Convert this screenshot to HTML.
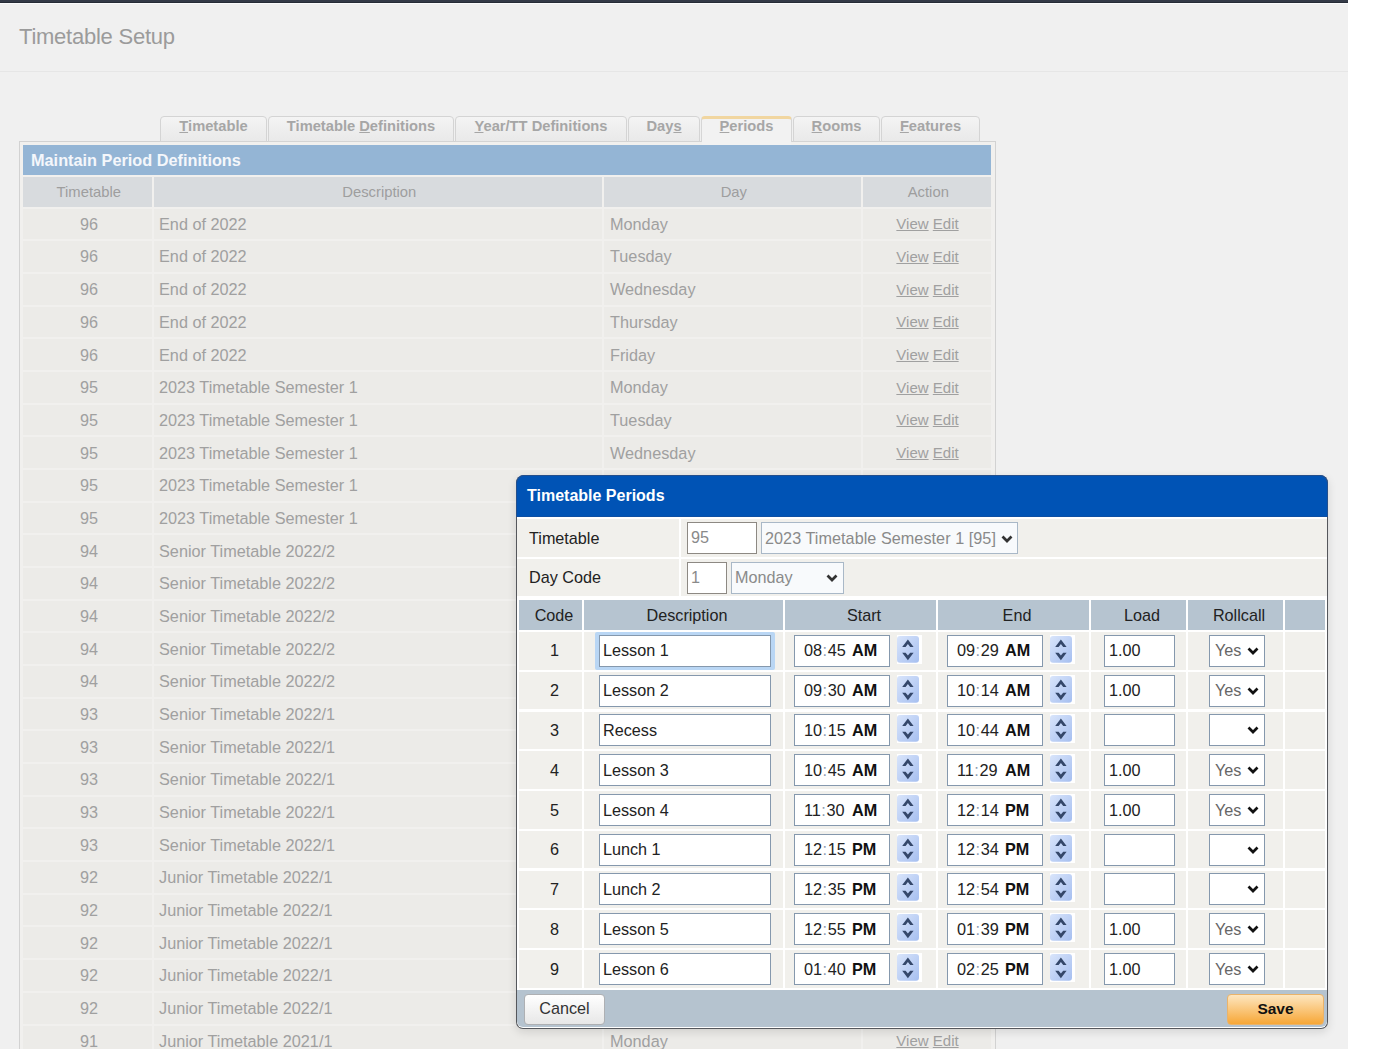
<!DOCTYPE html><html><head><meta charset="utf-8"><style>
*{box-sizing:border-box;margin:0;padding:0}
html,body{width:1396px;height:1049px;overflow:hidden;background:#fff;font-family:"Liberation Sans",sans-serif}
.a{position:absolute}
.t{position:absolute;white-space:nowrap;line-height:1}
u{text-decoration:underline}
</style></head><body>

<div class="a" style="left:0px;top:0px;width:1348px;height:1049px;background:#f0f0f0"></div>
<div class="a" style="left:0px;top:0px;width:1348px;height:2px;background:#343a47"></div>
<div class="a" style="left:0px;top:2px;width:1348px;height:1px;background:#262b36"></div>
<div class="a" style="left:0px;top:3px;width:1348px;height:1px;background:#fbfbfc"></div>
<div class="t" style="left:19px;top:26px;font-size:22px;color:#9b9b9b;letter-spacing:-0.24px">Timetable Setup</div>
<div class="a" style="left:0px;top:71px;width:1348px;height:1px;background:#e6e6e6"></div>
<div class="a" style="left:19px;top:141px;width:977px;height:920px;border:1px solid #d2d2d2;background:#f1f0ee"></div>
<div class="a" style="left:160px;top:116px;width:107px;height:26px;border:1px solid #d4d4d4;border-radius:4px 4px 0 0;background:linear-gradient(#f4f4f4,#e9e9e9)"></div>
<div class="t" style="left:160px;top:119px;font-size:14.7px;color:#a6a6a6;font-weight:bold;width:107px;text-align:center"><u>T</u>imetable</div>
<div class="a" style="left:268px;top:116px;width:186px;height:26px;border:1px solid #d4d4d4;border-radius:4px 4px 0 0;background:linear-gradient(#f4f4f4,#e9e9e9)"></div>
<div class="t" style="left:268px;top:119px;font-size:14.7px;color:#a6a6a6;font-weight:bold;width:186px;text-align:center">Timetable <u>D</u>efinitions</div>
<div class="a" style="left:455px;top:116px;width:172px;height:26px;border:1px solid #d4d4d4;border-radius:4px 4px 0 0;background:linear-gradient(#f4f4f4,#e9e9e9)"></div>
<div class="t" style="left:455px;top:119px;font-size:14.7px;color:#a6a6a6;font-weight:bold;width:172px;text-align:center"><u>Y</u>ear/TT Definitions</div>
<div class="a" style="left:628px;top:116px;width:72px;height:26px;border:1px solid #d4d4d4;border-radius:4px 4px 0 0;background:linear-gradient(#f4f4f4,#e9e9e9)"></div>
<div class="t" style="left:628px;top:119px;font-size:14.7px;color:#a6a6a6;font-weight:bold;width:72px;text-align:center">Day<u>s</u></div>
<div class="a" style="left:701px;top:116px;width:91px;height:26px;border:1px solid #d6d6d6;border-bottom:none;border-top:3px solid #f1d6a0;border-radius:4px 4px 0 0;background:#f2f2f2"></div>
<div class="a" style="left:702px;top:141px;width:89px;height:4px;background:#f2f2f2"></div>
<div class="t" style="left:701px;top:119px;font-size:14.7px;color:#a6a6a6;font-weight:bold;width:91px;text-align:center"><u>P</u>eriods</div>
<div class="a" style="left:793px;top:116px;width:87px;height:26px;border:1px solid #d4d4d4;border-radius:4px 4px 0 0;background:linear-gradient(#f4f4f4,#e9e9e9)"></div>
<div class="t" style="left:793px;top:119px;font-size:14.7px;color:#a6a6a6;font-weight:bold;width:87px;text-align:center"><u>R</u>ooms</div>
<div class="a" style="left:881px;top:116px;width:99px;height:26px;border:1px solid #d4d4d4;border-radius:4px 4px 0 0;background:linear-gradient(#f4f4f4,#e9e9e9)"></div>
<div class="t" style="left:881px;top:119px;font-size:14.7px;color:#a6a6a6;font-weight:bold;width:99px;text-align:center"><u>F</u>eatures</div>
<div class="a" style="left:23px;top:145px;width:968px;height:30px;background:#94b5d5"></div>
<div class="t" style="left:31px;top:152px;font-size:16.3px;color:#f4f7fb;font-weight:bold">Maintain Period Definitions</div>
<div class="a" style="left:23px;top:177px;width:129px;height:30px;background:#d8dbde"></div>
<div class="t" style="left:24.3px;top:185px;font-size:14.8px;color:#9e9e9e;width:129px;text-align:center">Timetable</div>
<div class="a" style="left:154px;top:177px;width:448px;height:30px;background:#d8dbde"></div>
<div class="t" style="left:155.3px;top:185px;font-size:14.8px;color:#9e9e9e;width:448px;text-align:center">Description</div>
<div class="a" style="left:604px;top:177px;width:257px;height:30px;background:#d8dbde"></div>
<div class="t" style="left:605.3px;top:185px;font-size:14.8px;color:#9e9e9e;width:257px;text-align:center">Day</div>
<div class="a" style="left:863px;top:177px;width:128px;height:30px;background:#d8dbde"></div>
<div class="t" style="left:864.3px;top:185px;font-size:14.8px;color:#9e9e9e;width:128px;text-align:center">Action</div>
<div class="a" style="left:23px;top:209px;width:129px;height:30px;background:#ecebe8"></div>
<div class="a" style="left:154px;top:209px;width:448px;height:30px;background:#ecebe8"></div>
<div class="a" style="left:604px;top:209px;width:257px;height:30px;background:#ecebe8"></div>
<div class="a" style="left:863px;top:209px;width:128px;height:30px;background:#ecebe8"></div>
<div class="t" style="left:24.5px;top:216px;font-size:16.2px;color:#a0a0a0;width:129px;text-align:center">96</div>
<div class="t" style="left:159px;top:216px;font-size:16.25px;color:#a0a0a0">End of 2022</div>
<div class="t" style="left:610px;top:216px;font-size:16.25px;color:#a0a0a0">Monday</div>
<div class="t" style="left:863px;top:216px;font-size:15px;color:#a0a0a0;width:129px;text-align:center"><u>View</u> <u>Edit</u></div>
<div class="a" style="left:23px;top:241px;width:129px;height:31px;background:#ecebe8"></div>
<div class="a" style="left:154px;top:241px;width:448px;height:31px;background:#ecebe8"></div>
<div class="a" style="left:604px;top:241px;width:257px;height:31px;background:#ecebe8"></div>
<div class="a" style="left:863px;top:241px;width:128px;height:31px;background:#ecebe8"></div>
<div class="t" style="left:24.5px;top:248px;font-size:16.2px;color:#a0a0a0;width:129px;text-align:center">96</div>
<div class="t" style="left:159px;top:248px;font-size:16.25px;color:#a0a0a0">End of 2022</div>
<div class="t" style="left:610px;top:248px;font-size:16.25px;color:#a0a0a0">Tuesday</div>
<div class="t" style="left:863px;top:249px;font-size:15px;color:#a0a0a0;width:129px;text-align:center"><u>View</u> <u>Edit</u></div>
<div class="a" style="left:23px;top:274px;width:129px;height:31px;background:#ecebe8"></div>
<div class="a" style="left:154px;top:274px;width:448px;height:31px;background:#ecebe8"></div>
<div class="a" style="left:604px;top:274px;width:257px;height:31px;background:#ecebe8"></div>
<div class="a" style="left:863px;top:274px;width:128px;height:31px;background:#ecebe8"></div>
<div class="t" style="left:24.5px;top:281px;font-size:16.2px;color:#a0a0a0;width:129px;text-align:center">96</div>
<div class="t" style="left:159px;top:281px;font-size:16.25px;color:#a0a0a0">End of 2022</div>
<div class="t" style="left:610px;top:281px;font-size:16.25px;color:#a0a0a0">Wednesday</div>
<div class="t" style="left:863px;top:282px;font-size:15px;color:#a0a0a0;width:129px;text-align:center"><u>View</u> <u>Edit</u></div>
<div class="a" style="left:23px;top:307px;width:129px;height:30px;background:#ecebe8"></div>
<div class="a" style="left:154px;top:307px;width:448px;height:30px;background:#ecebe8"></div>
<div class="a" style="left:604px;top:307px;width:257px;height:30px;background:#ecebe8"></div>
<div class="a" style="left:863px;top:307px;width:128px;height:30px;background:#ecebe8"></div>
<div class="t" style="left:24.5px;top:314px;font-size:16.2px;color:#a0a0a0;width:129px;text-align:center">96</div>
<div class="t" style="left:159px;top:314px;font-size:16.25px;color:#a0a0a0">End of 2022</div>
<div class="t" style="left:610px;top:314px;font-size:16.25px;color:#a0a0a0">Thursday</div>
<div class="t" style="left:863px;top:314px;font-size:15px;color:#a0a0a0;width:129px;text-align:center"><u>View</u> <u>Edit</u></div>
<div class="a" style="left:23px;top:339px;width:129px;height:31px;background:#ecebe8"></div>
<div class="a" style="left:154px;top:339px;width:448px;height:31px;background:#ecebe8"></div>
<div class="a" style="left:604px;top:339px;width:257px;height:31px;background:#ecebe8"></div>
<div class="a" style="left:863px;top:339px;width:128px;height:31px;background:#ecebe8"></div>
<div class="t" style="left:24.5px;top:347px;font-size:16.2px;color:#a0a0a0;width:129px;text-align:center">96</div>
<div class="t" style="left:159px;top:347px;font-size:16.25px;color:#a0a0a0">End of 2022</div>
<div class="t" style="left:610px;top:347px;font-size:16.25px;color:#a0a0a0">Friday</div>
<div class="t" style="left:863px;top:347px;font-size:15px;color:#a0a0a0;width:129px;text-align:center"><u>View</u> <u>Edit</u></div>
<div class="a" style="left:23px;top:372px;width:129px;height:31px;background:#ecebe8"></div>
<div class="a" style="left:154px;top:372px;width:448px;height:31px;background:#ecebe8"></div>
<div class="a" style="left:604px;top:372px;width:257px;height:31px;background:#ecebe8"></div>
<div class="a" style="left:863px;top:372px;width:128px;height:31px;background:#ecebe8"></div>
<div class="t" style="left:24.5px;top:379px;font-size:16.2px;color:#a0a0a0;width:129px;text-align:center">95</div>
<div class="t" style="left:159px;top:379px;font-size:16.25px;color:#a0a0a0">2023 Timetable Semester 1</div>
<div class="t" style="left:610px;top:379px;font-size:16.25px;color:#a0a0a0">Monday</div>
<div class="t" style="left:863px;top:380px;font-size:15px;color:#a0a0a0;width:129px;text-align:center"><u>View</u> <u>Edit</u></div>
<div class="a" style="left:23px;top:405px;width:129px;height:30px;background:#ecebe8"></div>
<div class="a" style="left:154px;top:405px;width:448px;height:30px;background:#ecebe8"></div>
<div class="a" style="left:604px;top:405px;width:257px;height:30px;background:#ecebe8"></div>
<div class="a" style="left:863px;top:405px;width:128px;height:30px;background:#ecebe8"></div>
<div class="t" style="left:24.5px;top:412px;font-size:16.2px;color:#a0a0a0;width:129px;text-align:center">95</div>
<div class="t" style="left:159px;top:412px;font-size:16.25px;color:#a0a0a0">2023 Timetable Semester 1</div>
<div class="t" style="left:610px;top:412px;font-size:16.25px;color:#a0a0a0">Tuesday</div>
<div class="t" style="left:863px;top:412px;font-size:15px;color:#a0a0a0;width:129px;text-align:center"><u>View</u> <u>Edit</u></div>
<div class="a" style="left:23px;top:437px;width:129px;height:31px;background:#ecebe8"></div>
<div class="a" style="left:154px;top:437px;width:448px;height:31px;background:#ecebe8"></div>
<div class="a" style="left:604px;top:437px;width:257px;height:31px;background:#ecebe8"></div>
<div class="a" style="left:863px;top:437px;width:128px;height:31px;background:#ecebe8"></div>
<div class="t" style="left:24.5px;top:445px;font-size:16.2px;color:#a0a0a0;width:129px;text-align:center">95</div>
<div class="t" style="left:159px;top:445px;font-size:16.25px;color:#a0a0a0">2023 Timetable Semester 1</div>
<div class="t" style="left:610px;top:445px;font-size:16.25px;color:#a0a0a0">Wednesday</div>
<div class="t" style="left:863px;top:445px;font-size:15px;color:#a0a0a0;width:129px;text-align:center"><u>View</u> <u>Edit</u></div>
<div class="a" style="left:23px;top:470px;width:129px;height:31px;background:#ecebe8"></div>
<div class="a" style="left:154px;top:470px;width:448px;height:31px;background:#ecebe8"></div>
<div class="a" style="left:604px;top:470px;width:257px;height:31px;background:#ecebe8"></div>
<div class="a" style="left:863px;top:470px;width:128px;height:31px;background:#ecebe8"></div>
<div class="t" style="left:24.5px;top:477px;font-size:16.2px;color:#a0a0a0;width:129px;text-align:center">95</div>
<div class="t" style="left:159px;top:477px;font-size:16.25px;color:#a0a0a0">2023 Timetable Semester 1</div>
<div class="t" style="left:610px;top:477px;font-size:16.25px;color:#a0a0a0">Thursday</div>
<div class="t" style="left:863px;top:478px;font-size:15px;color:#a0a0a0;width:129px;text-align:center"><u>View</u> <u>Edit</u></div>
<div class="a" style="left:23px;top:503px;width:129px;height:30px;background:#ecebe8"></div>
<div class="a" style="left:154px;top:503px;width:448px;height:30px;background:#ecebe8"></div>
<div class="a" style="left:604px;top:503px;width:257px;height:30px;background:#ecebe8"></div>
<div class="a" style="left:863px;top:503px;width:128px;height:30px;background:#ecebe8"></div>
<div class="t" style="left:24.5px;top:510px;font-size:16.2px;color:#a0a0a0;width:129px;text-align:center">95</div>
<div class="t" style="left:159px;top:510px;font-size:16.25px;color:#a0a0a0">2023 Timetable Semester 1</div>
<div class="t" style="left:610px;top:510px;font-size:16.25px;color:#a0a0a0">Friday</div>
<div class="t" style="left:863px;top:510px;font-size:15px;color:#a0a0a0;width:129px;text-align:center"><u>View</u> <u>Edit</u></div>
<div class="a" style="left:23px;top:535px;width:129px;height:31px;background:#ecebe8"></div>
<div class="a" style="left:154px;top:535px;width:448px;height:31px;background:#ecebe8"></div>
<div class="a" style="left:604px;top:535px;width:257px;height:31px;background:#ecebe8"></div>
<div class="a" style="left:863px;top:535px;width:128px;height:31px;background:#ecebe8"></div>
<div class="t" style="left:24.5px;top:543px;font-size:16.2px;color:#a0a0a0;width:129px;text-align:center">94</div>
<div class="t" style="left:159px;top:543px;font-size:16.25px;color:#a0a0a0">Senior Timetable 2022/2</div>
<div class="t" style="left:610px;top:543px;font-size:16.25px;color:#a0a0a0">Monday</div>
<div class="t" style="left:863px;top:543px;font-size:15px;color:#a0a0a0;width:129px;text-align:center"><u>View</u> <u>Edit</u></div>
<div class="a" style="left:23px;top:568px;width:129px;height:31px;background:#ecebe8"></div>
<div class="a" style="left:154px;top:568px;width:448px;height:31px;background:#ecebe8"></div>
<div class="a" style="left:604px;top:568px;width:257px;height:31px;background:#ecebe8"></div>
<div class="a" style="left:863px;top:568px;width:128px;height:31px;background:#ecebe8"></div>
<div class="t" style="left:24.5px;top:575px;font-size:16.2px;color:#a0a0a0;width:129px;text-align:center">94</div>
<div class="t" style="left:159px;top:575px;font-size:16.25px;color:#a0a0a0">Senior Timetable 2022/2</div>
<div class="t" style="left:610px;top:575px;font-size:16.25px;color:#a0a0a0">Tuesday</div>
<div class="t" style="left:863px;top:576px;font-size:15px;color:#a0a0a0;width:129px;text-align:center"><u>View</u> <u>Edit</u></div>
<div class="a" style="left:23px;top:601px;width:129px;height:30px;background:#ecebe8"></div>
<div class="a" style="left:154px;top:601px;width:448px;height:30px;background:#ecebe8"></div>
<div class="a" style="left:604px;top:601px;width:257px;height:30px;background:#ecebe8"></div>
<div class="a" style="left:863px;top:601px;width:128px;height:30px;background:#ecebe8"></div>
<div class="t" style="left:24.5px;top:608px;font-size:16.2px;color:#a0a0a0;width:129px;text-align:center">94</div>
<div class="t" style="left:159px;top:608px;font-size:16.25px;color:#a0a0a0">Senior Timetable 2022/2</div>
<div class="t" style="left:610px;top:608px;font-size:16.25px;color:#a0a0a0">Wednesday</div>
<div class="t" style="left:863px;top:608px;font-size:15px;color:#a0a0a0;width:129px;text-align:center"><u>View</u> <u>Edit</u></div>
<div class="a" style="left:23px;top:633px;width:129px;height:31px;background:#ecebe8"></div>
<div class="a" style="left:154px;top:633px;width:448px;height:31px;background:#ecebe8"></div>
<div class="a" style="left:604px;top:633px;width:257px;height:31px;background:#ecebe8"></div>
<div class="a" style="left:863px;top:633px;width:128px;height:31px;background:#ecebe8"></div>
<div class="t" style="left:24.5px;top:641px;font-size:16.2px;color:#a0a0a0;width:129px;text-align:center">94</div>
<div class="t" style="left:159px;top:641px;font-size:16.25px;color:#a0a0a0">Senior Timetable 2022/2</div>
<div class="t" style="left:610px;top:641px;font-size:16.25px;color:#a0a0a0">Thursday</div>
<div class="t" style="left:863px;top:641px;font-size:15px;color:#a0a0a0;width:129px;text-align:center"><u>View</u> <u>Edit</u></div>
<div class="a" style="left:23px;top:666px;width:129px;height:31px;background:#ecebe8"></div>
<div class="a" style="left:154px;top:666px;width:448px;height:31px;background:#ecebe8"></div>
<div class="a" style="left:604px;top:666px;width:257px;height:31px;background:#ecebe8"></div>
<div class="a" style="left:863px;top:666px;width:128px;height:31px;background:#ecebe8"></div>
<div class="t" style="left:24.5px;top:673px;font-size:16.2px;color:#a0a0a0;width:129px;text-align:center">94</div>
<div class="t" style="left:159px;top:673px;font-size:16.25px;color:#a0a0a0">Senior Timetable 2022/2</div>
<div class="t" style="left:610px;top:673px;font-size:16.25px;color:#a0a0a0">Friday</div>
<div class="t" style="left:863px;top:674px;font-size:15px;color:#a0a0a0;width:129px;text-align:center"><u>View</u> <u>Edit</u></div>
<div class="a" style="left:23px;top:699px;width:129px;height:30px;background:#ecebe8"></div>
<div class="a" style="left:154px;top:699px;width:448px;height:30px;background:#ecebe8"></div>
<div class="a" style="left:604px;top:699px;width:257px;height:30px;background:#ecebe8"></div>
<div class="a" style="left:863px;top:699px;width:128px;height:30px;background:#ecebe8"></div>
<div class="t" style="left:24.5px;top:706px;font-size:16.2px;color:#a0a0a0;width:129px;text-align:center">93</div>
<div class="t" style="left:159px;top:706px;font-size:16.25px;color:#a0a0a0">Senior Timetable 2022/1</div>
<div class="t" style="left:610px;top:706px;font-size:16.25px;color:#a0a0a0">Monday</div>
<div class="t" style="left:863px;top:706px;font-size:15px;color:#a0a0a0;width:129px;text-align:center"><u>View</u> <u>Edit</u></div>
<div class="a" style="left:23px;top:731px;width:129px;height:31px;background:#ecebe8"></div>
<div class="a" style="left:154px;top:731px;width:448px;height:31px;background:#ecebe8"></div>
<div class="a" style="left:604px;top:731px;width:257px;height:31px;background:#ecebe8"></div>
<div class="a" style="left:863px;top:731px;width:128px;height:31px;background:#ecebe8"></div>
<div class="t" style="left:24.5px;top:739px;font-size:16.2px;color:#a0a0a0;width:129px;text-align:center">93</div>
<div class="t" style="left:159px;top:739px;font-size:16.25px;color:#a0a0a0">Senior Timetable 2022/1</div>
<div class="t" style="left:610px;top:739px;font-size:16.25px;color:#a0a0a0">Tuesday</div>
<div class="t" style="left:863px;top:739px;font-size:15px;color:#a0a0a0;width:129px;text-align:center"><u>View</u> <u>Edit</u></div>
<div class="a" style="left:23px;top:764px;width:129px;height:31px;background:#ecebe8"></div>
<div class="a" style="left:154px;top:764px;width:448px;height:31px;background:#ecebe8"></div>
<div class="a" style="left:604px;top:764px;width:257px;height:31px;background:#ecebe8"></div>
<div class="a" style="left:863px;top:764px;width:128px;height:31px;background:#ecebe8"></div>
<div class="t" style="left:24.5px;top:771px;font-size:16.2px;color:#a0a0a0;width:129px;text-align:center">93</div>
<div class="t" style="left:159px;top:771px;font-size:16.25px;color:#a0a0a0">Senior Timetable 2022/1</div>
<div class="t" style="left:610px;top:771px;font-size:16.25px;color:#a0a0a0">Wednesday</div>
<div class="t" style="left:863px;top:772px;font-size:15px;color:#a0a0a0;width:129px;text-align:center"><u>View</u> <u>Edit</u></div>
<div class="a" style="left:23px;top:797px;width:129px;height:30px;background:#ecebe8"></div>
<div class="a" style="left:154px;top:797px;width:448px;height:30px;background:#ecebe8"></div>
<div class="a" style="left:604px;top:797px;width:257px;height:30px;background:#ecebe8"></div>
<div class="a" style="left:863px;top:797px;width:128px;height:30px;background:#ecebe8"></div>
<div class="t" style="left:24.5px;top:804px;font-size:16.2px;color:#a0a0a0;width:129px;text-align:center">93</div>
<div class="t" style="left:159px;top:804px;font-size:16.25px;color:#a0a0a0">Senior Timetable 2022/1</div>
<div class="t" style="left:610px;top:804px;font-size:16.25px;color:#a0a0a0">Thursday</div>
<div class="t" style="left:863px;top:804px;font-size:15px;color:#a0a0a0;width:129px;text-align:center"><u>View</u> <u>Edit</u></div>
<div class="a" style="left:23px;top:829px;width:129px;height:31px;background:#ecebe8"></div>
<div class="a" style="left:154px;top:829px;width:448px;height:31px;background:#ecebe8"></div>
<div class="a" style="left:604px;top:829px;width:257px;height:31px;background:#ecebe8"></div>
<div class="a" style="left:863px;top:829px;width:128px;height:31px;background:#ecebe8"></div>
<div class="t" style="left:24.5px;top:837px;font-size:16.2px;color:#a0a0a0;width:129px;text-align:center">93</div>
<div class="t" style="left:159px;top:837px;font-size:16.25px;color:#a0a0a0">Senior Timetable 2022/1</div>
<div class="t" style="left:610px;top:837px;font-size:16.25px;color:#a0a0a0">Friday</div>
<div class="t" style="left:863px;top:837px;font-size:15px;color:#a0a0a0;width:129px;text-align:center"><u>View</u> <u>Edit</u></div>
<div class="a" style="left:23px;top:862px;width:129px;height:31px;background:#ecebe8"></div>
<div class="a" style="left:154px;top:862px;width:448px;height:31px;background:#ecebe8"></div>
<div class="a" style="left:604px;top:862px;width:257px;height:31px;background:#ecebe8"></div>
<div class="a" style="left:863px;top:862px;width:128px;height:31px;background:#ecebe8"></div>
<div class="t" style="left:24.5px;top:869px;font-size:16.2px;color:#a0a0a0;width:129px;text-align:center">92</div>
<div class="t" style="left:159px;top:869px;font-size:16.25px;color:#a0a0a0">Junior Timetable 2022/1</div>
<div class="t" style="left:610px;top:869px;font-size:16.25px;color:#a0a0a0">Monday</div>
<div class="t" style="left:863px;top:870px;font-size:15px;color:#a0a0a0;width:129px;text-align:center"><u>View</u> <u>Edit</u></div>
<div class="a" style="left:23px;top:895px;width:129px;height:30px;background:#ecebe8"></div>
<div class="a" style="left:154px;top:895px;width:448px;height:30px;background:#ecebe8"></div>
<div class="a" style="left:604px;top:895px;width:257px;height:30px;background:#ecebe8"></div>
<div class="a" style="left:863px;top:895px;width:128px;height:30px;background:#ecebe8"></div>
<div class="t" style="left:24.5px;top:902px;font-size:16.2px;color:#a0a0a0;width:129px;text-align:center">92</div>
<div class="t" style="left:159px;top:902px;font-size:16.25px;color:#a0a0a0">Junior Timetable 2022/1</div>
<div class="t" style="left:610px;top:902px;font-size:16.25px;color:#a0a0a0">Tuesday</div>
<div class="t" style="left:863px;top:902px;font-size:15px;color:#a0a0a0;width:129px;text-align:center"><u>View</u> <u>Edit</u></div>
<div class="a" style="left:23px;top:927px;width:129px;height:31px;background:#ecebe8"></div>
<div class="a" style="left:154px;top:927px;width:448px;height:31px;background:#ecebe8"></div>
<div class="a" style="left:604px;top:927px;width:257px;height:31px;background:#ecebe8"></div>
<div class="a" style="left:863px;top:927px;width:128px;height:31px;background:#ecebe8"></div>
<div class="t" style="left:24.5px;top:935px;font-size:16.2px;color:#a0a0a0;width:129px;text-align:center">92</div>
<div class="t" style="left:159px;top:935px;font-size:16.25px;color:#a0a0a0">Junior Timetable 2022/1</div>
<div class="t" style="left:610px;top:935px;font-size:16.25px;color:#a0a0a0">Wednesday</div>
<div class="t" style="left:863px;top:935px;font-size:15px;color:#a0a0a0;width:129px;text-align:center"><u>View</u> <u>Edit</u></div>
<div class="a" style="left:23px;top:960px;width:129px;height:31px;background:#ecebe8"></div>
<div class="a" style="left:154px;top:960px;width:448px;height:31px;background:#ecebe8"></div>
<div class="a" style="left:604px;top:960px;width:257px;height:31px;background:#ecebe8"></div>
<div class="a" style="left:863px;top:960px;width:128px;height:31px;background:#ecebe8"></div>
<div class="t" style="left:24.5px;top:967px;font-size:16.2px;color:#a0a0a0;width:129px;text-align:center">92</div>
<div class="t" style="left:159px;top:967px;font-size:16.25px;color:#a0a0a0">Junior Timetable 2022/1</div>
<div class="t" style="left:610px;top:967px;font-size:16.25px;color:#a0a0a0">Thursday</div>
<div class="t" style="left:863px;top:968px;font-size:15px;color:#a0a0a0;width:129px;text-align:center"><u>View</u> <u>Edit</u></div>
<div class="a" style="left:23px;top:993px;width:129px;height:31px;background:#ecebe8"></div>
<div class="a" style="left:154px;top:993px;width:448px;height:31px;background:#ecebe8"></div>
<div class="a" style="left:604px;top:993px;width:257px;height:31px;background:#ecebe8"></div>
<div class="a" style="left:863px;top:993px;width:128px;height:31px;background:#ecebe8"></div>
<div class="t" style="left:24.5px;top:1000px;font-size:16.2px;color:#a0a0a0;width:129px;text-align:center">92</div>
<div class="t" style="left:159px;top:1000px;font-size:16.25px;color:#a0a0a0">Junior Timetable 2022/1</div>
<div class="t" style="left:610px;top:1000px;font-size:16.25px;color:#a0a0a0">Friday</div>
<div class="t" style="left:863px;top:1001px;font-size:15px;color:#a0a0a0;width:129px;text-align:center"><u>View</u> <u>Edit</u></div>
<div class="a" style="left:23px;top:1026px;width:129px;height:30px;background:#ecebe8"></div>
<div class="a" style="left:154px;top:1026px;width:448px;height:30px;background:#ecebe8"></div>
<div class="a" style="left:604px;top:1026px;width:257px;height:30px;background:#ecebe8"></div>
<div class="a" style="left:863px;top:1026px;width:128px;height:30px;background:#ecebe8"></div>
<div class="t" style="left:24.5px;top:1033px;font-size:16.2px;color:#a0a0a0;width:129px;text-align:center">91</div>
<div class="t" style="left:159px;top:1033px;font-size:16.25px;color:#a0a0a0">Junior Timetable 2021/1</div>
<div class="t" style="left:610px;top:1033px;font-size:16.25px;color:#a0a0a0">Monday</div>
<div class="t" style="left:863px;top:1033px;font-size:15px;color:#a0a0a0;width:129px;text-align:center"><u>View</u> <u>Edit</u></div>
<div class="a" style="left:516px;top:475px;width:812px;height:554px;border:1px solid #55575c;border-top-color:#2a4f86;border-radius:8px 8px 7px 7px;background:#fff;box-shadow:0 3px 10px rgba(0,0,0,0.12);overflow:hidden"></div>
<div class="a" style="left:516px;top:475px;width:812px;height:42px;background:#0053b5;border:1px solid #244f8c;border-bottom:none;border-radius:8px 8px 0 0"></div>
<div class="a" style="left:517px;top:516px;width:810px;height:1px;background:#0d4fa3"></div>
<div class="t" style="left:527px;top:488px;font-size:16px;color:#fff;font-weight:bold">Timetable Periods</div>
<div class="a" style="left:517px;top:519px;width:162px;height:38px;background:#f1f0ec"></div>
<div class="a" style="left:681px;top:519px;width:646px;height:38px;background:#f1f0ec"></div>
<div class="t" style="left:529px;top:530px;font-size:16.2px;color:#222">Timetable</div>
<div class="a" style="left:517px;top:559px;width:162px;height:37px;background:#f1f0ec"></div>
<div class="a" style="left:681px;top:559px;width:646px;height:37px;background:#f1f0ec"></div>
<div class="t" style="left:529px;top:569px;font-size:16.2px;color:#222">Day Code</div>
<div class="a" style="left:687px;top:522px;width:70px;height:32px;border:1px solid #8d8983;background:#fff"></div>
<div class="t" style="left:691px;top:529px;font-size:16.2px;color:#8a8a8a">95</div>
<div class="a" style="left:761px;top:522px;width:257px;height:32px;border:1px solid #a9b8c7;background:#f8fafc"></div>
<div class="t" style="left:765px;top:530px;font-size:16.2px;color:#8a8a8a;letter-spacing:0.05px">2023 Timetable Semester 1 [95]</div>
<svg class="a" style="left:1001.1px;top:534.8px" width="12" height="8" viewBox="0 0 12 8"><path d="M1.5 1.5 L6 6 L10.5 1.5" fill="none" stroke="#333" stroke-width="2.7"/></svg>
<div class="a" style="left:687px;top:562px;width:40px;height:32px;border:1px solid #8d8983;background:#fff"></div>
<div class="t" style="left:691px;top:569px;font-size:16.2px;color:#8a8a8a">1</div>
<div class="a" style="left:731px;top:562px;width:113px;height:32px;border:1px solid #a9b8c7;background:#f8fafc"></div>
<div class="t" style="left:735px;top:569px;font-size:16.2px;color:#8a8a8a">Monday</div>
<svg class="a" style="left:826.3px;top:574.2px" width="12" height="8" viewBox="0 0 12 8"><path d="M1.5 1.5 L6 6 L10.5 1.5" fill="none" stroke="#333" stroke-width="2.7"/></svg>
<div class="a" style="left:519px;top:600px;width:63px;height:30px;background:#b6c4d0"></div>
<div class="t" style="left:522.5px;top:607px;font-size:16.2px;color:#222;width:63px;text-align:center">Code</div>
<div class="a" style="left:584px;top:600px;width:199px;height:30px;background:#b6c4d0"></div>
<div class="t" style="left:587.5px;top:607px;font-size:16.2px;color:#222;width:199px;text-align:center">Description</div>
<div class="a" style="left:785px;top:600px;width:151px;height:30px;background:#b6c4d0"></div>
<div class="t" style="left:788.5px;top:607px;font-size:16.2px;color:#222;width:151px;text-align:center">Start</div>
<div class="a" style="left:938px;top:600px;width:151px;height:30px;background:#b6c4d0"></div>
<div class="t" style="left:941.5px;top:607px;font-size:16.2px;color:#222;width:151px;text-align:center">End</div>
<div class="a" style="left:1091px;top:600px;width:95px;height:30px;background:#b6c4d0"></div>
<div class="t" style="left:1094.5px;top:607px;font-size:16.2px;color:#222;width:95px;text-align:center">Load</div>
<div class="a" style="left:1188px;top:600px;width:95px;height:30px;background:#b6c4d0"></div>
<div class="t" style="left:1191.5px;top:607px;font-size:16.2px;color:#222;width:95px;text-align:center">Rollcall</div>
<div class="a" style="left:1285px;top:600px;width:40px;height:30px;background:#b6c4d0"></div>
<div class="a" style="left:519px;top:632px;width:63px;height:37.6px;background:#f1f0ec"></div>
<div class="a" style="left:584px;top:632px;width:199px;height:37.6px;background:#f1f0ec"></div>
<div class="a" style="left:785px;top:632px;width:151px;height:37.6px;background:#f1f0ec"></div>
<div class="a" style="left:938px;top:632px;width:151px;height:37.6px;background:#f1f0ec"></div>
<div class="a" style="left:1091px;top:632px;width:95px;height:37.6px;background:#f1f0ec"></div>
<div class="a" style="left:1188px;top:632px;width:95px;height:37.6px;background:#f1f0ec"></div>
<div class="a" style="left:1285px;top:632px;width:40px;height:37.6px;background:#f1f0ec"></div>
<div class="t" style="left:523px;top:642px;font-size:16.2px;color:#222;width:63px;text-align:center">1</div>
<div class="a" style="left:595px;top:632px;width:180px;height:38px;background:#b9d6f4;border-radius:2px"></div>
<div class="a" style="left:599px;top:635px;width:172px;height:32px;border:1px solid #8598ad;background:#fff"></div>
<div class="t" style="left:603px;top:642px;font-size:16.2px;color:#222">Lesson 1</div>
<div class="a" style="left:794px;top:635px;width:96px;height:32px;border:1px solid #8598ad;background:#fff"></div>
<div class="t" style="left:804px;top:642px;font-size:16.3px;color:#222">08<span style="color:#8d9cb0;padding:0 0.6px 0 0.4px">:</span>45</div>
<div class="t" style="left:852px;top:642px;font-size:16.2px;color:#111;font-weight:bold">AM</div>
<div class="a" style="left:897px;top:635px;width:25px;height:29px;background:#fff"></div><svg class="a" style="left:897px;top:635.7px" width="22" height="27" viewBox="0 0 22 27"><defs><linearGradient id="sg1" x1="0" y1="0" x2="1" y2="1"><stop offset="0" stop-color="#d9e5fb"/><stop offset="1" stop-color="#a6bff0"/></linearGradient></defs><rect x="0" y="0" width="22" height="26.7" rx="3" fill="url(#sg1)"/><path d="M5.2 10.9 L10.9 3.4 L16.6 10.9 L13.2 10.9 L10.9 8.0 L8.6 10.9 Z" fill="#34476a"/><path d="M5.2 16.7 L8.6 16.7 L10.9 19.6 L13.2 16.7 L16.6 16.7 L10.9 24.2 Z" fill="#34476a"/></svg>
<div class="a" style="left:947px;top:635px;width:96px;height:32px;border:1px solid #8598ad;background:#fff"></div>
<div class="t" style="left:957px;top:642px;font-size:16.3px;color:#222">09<span style="color:#8d9cb0;padding:0 0.6px 0 0.4px">:</span>29</div>
<div class="t" style="left:1005px;top:642px;font-size:16.2px;color:#111;font-weight:bold">AM</div>
<div class="a" style="left:1050px;top:635px;width:25px;height:29px;background:#fff"></div><svg class="a" style="left:1050px;top:635.7px" width="22" height="27" viewBox="0 0 22 27"><defs><linearGradient id="sg2" x1="0" y1="0" x2="1" y2="1"><stop offset="0" stop-color="#d9e5fb"/><stop offset="1" stop-color="#a6bff0"/></linearGradient></defs><rect x="0" y="0" width="22" height="26.7" rx="3" fill="url(#sg2)"/><path d="M5.2 10.9 L10.9 3.4 L16.6 10.9 L13.2 10.9 L10.9 8.0 L8.6 10.9 Z" fill="#34476a"/><path d="M5.2 16.7 L8.6 16.7 L10.9 19.6 L13.2 16.7 L16.6 16.7 L10.9 24.2 Z" fill="#34476a"/></svg>
<div class="a" style="left:1104px;top:635px;width:71px;height:32px;border:1px solid #8598ad;background:#fff"></div>
<div class="t" style="left:1109px;top:642px;font-size:16.2px;color:#222">1.00</div>
<div class="a" style="left:1209px;top:635px;width:56px;height:32px;border:1px solid #8598ad;background:#fff"></div>
<div class="t" style="left:1215px;top:642px;font-size:16.2px;color:#666">Yes</div>
<svg class="a" style="left:1246.6px;top:647.2px" width="12" height="8" viewBox="0 0 12 8"><path d="M1.5 1.5 L6 6 L10.5 1.5" fill="none" stroke="#111" stroke-width="2.7"/></svg>
<div class="a" style="left:519px;top:671.78px;width:63px;height:37.6px;background:#f1f0ec"></div>
<div class="a" style="left:584px;top:671.78px;width:199px;height:37.6px;background:#f1f0ec"></div>
<div class="a" style="left:785px;top:671.78px;width:151px;height:37.6px;background:#f1f0ec"></div>
<div class="a" style="left:938px;top:671.78px;width:151px;height:37.6px;background:#f1f0ec"></div>
<div class="a" style="left:1091px;top:671.78px;width:95px;height:37.6px;background:#f1f0ec"></div>
<div class="a" style="left:1188px;top:671.78px;width:95px;height:37.6px;background:#f1f0ec"></div>
<div class="a" style="left:1285px;top:671.78px;width:40px;height:37.6px;background:#f1f0ec"></div>
<div class="t" style="left:523px;top:682px;font-size:16.2px;color:#222;width:63px;text-align:center">2</div>
<div class="a" style="left:599px;top:675px;width:172px;height:32px;border:1px solid #8598ad;background:#fff"></div>
<div class="t" style="left:603px;top:682px;font-size:16.2px;color:#222">Lesson 2</div>
<div class="a" style="left:794px;top:675px;width:96px;height:32px;border:1px solid #8598ad;background:#fff"></div>
<div class="t" style="left:804px;top:682px;font-size:16.3px;color:#222">09<span style="color:#8d9cb0;padding:0 0.6px 0 0.4px">:</span>30</div>
<div class="t" style="left:852px;top:682px;font-size:16.2px;color:#111;font-weight:bold">AM</div>
<div class="a" style="left:897px;top:675px;width:25px;height:29px;background:#fff"></div><svg class="a" style="left:897px;top:675.7px" width="22" height="27" viewBox="0 0 22 27"><defs><linearGradient id="sg3" x1="0" y1="0" x2="1" y2="1"><stop offset="0" stop-color="#d9e5fb"/><stop offset="1" stop-color="#a6bff0"/></linearGradient></defs><rect x="0" y="0" width="22" height="26.7" rx="3" fill="url(#sg3)"/><path d="M5.2 10.9 L10.9 3.4 L16.6 10.9 L13.2 10.9 L10.9 8.0 L8.6 10.9 Z" fill="#34476a"/><path d="M5.2 16.7 L8.6 16.7 L10.9 19.6 L13.2 16.7 L16.6 16.7 L10.9 24.2 Z" fill="#34476a"/></svg>
<div class="a" style="left:947px;top:675px;width:96px;height:32px;border:1px solid #8598ad;background:#fff"></div>
<div class="t" style="left:957px;top:682px;font-size:16.3px;color:#222">10<span style="color:#8d9cb0;padding:0 0.6px 0 0.4px">:</span>14</div>
<div class="t" style="left:1005px;top:682px;font-size:16.2px;color:#111;font-weight:bold">AM</div>
<div class="a" style="left:1050px;top:675px;width:25px;height:29px;background:#fff"></div><svg class="a" style="left:1050px;top:675.7px" width="22" height="27" viewBox="0 0 22 27"><defs><linearGradient id="sg4" x1="0" y1="0" x2="1" y2="1"><stop offset="0" stop-color="#d9e5fb"/><stop offset="1" stop-color="#a6bff0"/></linearGradient></defs><rect x="0" y="0" width="22" height="26.7" rx="3" fill="url(#sg4)"/><path d="M5.2 10.9 L10.9 3.4 L16.6 10.9 L13.2 10.9 L10.9 8.0 L8.6 10.9 Z" fill="#34476a"/><path d="M5.2 16.7 L8.6 16.7 L10.9 19.6 L13.2 16.7 L16.6 16.7 L10.9 24.2 Z" fill="#34476a"/></svg>
<div class="a" style="left:1104px;top:675px;width:71px;height:32px;border:1px solid #8598ad;background:#fff"></div>
<div class="t" style="left:1109px;top:682px;font-size:16.2px;color:#222">1.00</div>
<div class="a" style="left:1209px;top:675px;width:56px;height:32px;border:1px solid #8598ad;background:#fff"></div>
<div class="t" style="left:1215px;top:682px;font-size:16.2px;color:#666">Yes</div>
<svg class="a" style="left:1246.6px;top:687.2px" width="12" height="8" viewBox="0 0 12 8"><path d="M1.5 1.5 L6 6 L10.5 1.5" fill="none" stroke="#111" stroke-width="2.7"/></svg>
<div class="a" style="left:519px;top:711.56px;width:63px;height:37.6px;background:#f1f0ec"></div>
<div class="a" style="left:584px;top:711.56px;width:199px;height:37.6px;background:#f1f0ec"></div>
<div class="a" style="left:785px;top:711.56px;width:151px;height:37.6px;background:#f1f0ec"></div>
<div class="a" style="left:938px;top:711.56px;width:151px;height:37.6px;background:#f1f0ec"></div>
<div class="a" style="left:1091px;top:711.56px;width:95px;height:37.6px;background:#f1f0ec"></div>
<div class="a" style="left:1188px;top:711.56px;width:95px;height:37.6px;background:#f1f0ec"></div>
<div class="a" style="left:1285px;top:711.56px;width:40px;height:37.6px;background:#f1f0ec"></div>
<div class="t" style="left:523px;top:722px;font-size:16.2px;color:#222;width:63px;text-align:center">3</div>
<div class="a" style="left:599px;top:714px;width:172px;height:32px;border:1px solid #8598ad;background:#fff"></div>
<div class="t" style="left:603px;top:722px;font-size:16.2px;color:#222">Recess</div>
<div class="a" style="left:794px;top:714px;width:96px;height:32px;border:1px solid #8598ad;background:#fff"></div>
<div class="t" style="left:804px;top:722px;font-size:16.3px;color:#222">10<span style="color:#8d9cb0;padding:0 0.6px 0 0.4px">:</span>15</div>
<div class="t" style="left:852px;top:722px;font-size:16.2px;color:#111;font-weight:bold">AM</div>
<div class="a" style="left:897px;top:714px;width:25px;height:29px;background:#fff"></div><svg class="a" style="left:897px;top:714.7px" width="22" height="27" viewBox="0 0 22 27"><defs><linearGradient id="sg5" x1="0" y1="0" x2="1" y2="1"><stop offset="0" stop-color="#d9e5fb"/><stop offset="1" stop-color="#a6bff0"/></linearGradient></defs><rect x="0" y="0" width="22" height="26.7" rx="3" fill="url(#sg5)"/><path d="M5.2 10.9 L10.9 3.4 L16.6 10.9 L13.2 10.9 L10.9 8.0 L8.6 10.9 Z" fill="#34476a"/><path d="M5.2 16.7 L8.6 16.7 L10.9 19.6 L13.2 16.7 L16.6 16.7 L10.9 24.2 Z" fill="#34476a"/></svg>
<div class="a" style="left:947px;top:714px;width:96px;height:32px;border:1px solid #8598ad;background:#fff"></div>
<div class="t" style="left:957px;top:722px;font-size:16.3px;color:#222">10<span style="color:#8d9cb0;padding:0 0.6px 0 0.4px">:</span>44</div>
<div class="t" style="left:1005px;top:722px;font-size:16.2px;color:#111;font-weight:bold">AM</div>
<div class="a" style="left:1050px;top:714px;width:25px;height:29px;background:#fff"></div><svg class="a" style="left:1050px;top:714.7px" width="22" height="27" viewBox="0 0 22 27"><defs><linearGradient id="sg6" x1="0" y1="0" x2="1" y2="1"><stop offset="0" stop-color="#d9e5fb"/><stop offset="1" stop-color="#a6bff0"/></linearGradient></defs><rect x="0" y="0" width="22" height="26.7" rx="3" fill="url(#sg6)"/><path d="M5.2 10.9 L10.9 3.4 L16.6 10.9 L13.2 10.9 L10.9 8.0 L8.6 10.9 Z" fill="#34476a"/><path d="M5.2 16.7 L8.6 16.7 L10.9 19.6 L13.2 16.7 L16.6 16.7 L10.9 24.2 Z" fill="#34476a"/></svg>
<div class="a" style="left:1104px;top:714px;width:71px;height:32px;border:1px solid #8598ad;background:#fff"></div>
<div class="a" style="left:1209px;top:714px;width:56px;height:32px;border:1px solid #8598ad;background:#fff"></div>
<svg class="a" style="left:1246.6px;top:726.2px" width="12" height="8" viewBox="0 0 12 8"><path d="M1.5 1.5 L6 6 L10.5 1.5" fill="none" stroke="#111" stroke-width="2.7"/></svg>
<div class="a" style="left:519px;top:751.34px;width:63px;height:37.6px;background:#f1f0ec"></div>
<div class="a" style="left:584px;top:751.34px;width:199px;height:37.6px;background:#f1f0ec"></div>
<div class="a" style="left:785px;top:751.34px;width:151px;height:37.6px;background:#f1f0ec"></div>
<div class="a" style="left:938px;top:751.34px;width:151px;height:37.6px;background:#f1f0ec"></div>
<div class="a" style="left:1091px;top:751.34px;width:95px;height:37.6px;background:#f1f0ec"></div>
<div class="a" style="left:1188px;top:751.34px;width:95px;height:37.6px;background:#f1f0ec"></div>
<div class="a" style="left:1285px;top:751.34px;width:40px;height:37.6px;background:#f1f0ec"></div>
<div class="t" style="left:523px;top:762px;font-size:16.2px;color:#222;width:63px;text-align:center">4</div>
<div class="a" style="left:599px;top:754px;width:172px;height:32px;border:1px solid #8598ad;background:#fff"></div>
<div class="t" style="left:603px;top:762px;font-size:16.2px;color:#222">Lesson 3</div>
<div class="a" style="left:794px;top:754px;width:96px;height:32px;border:1px solid #8598ad;background:#fff"></div>
<div class="t" style="left:804px;top:762px;font-size:16.3px;color:#222">10<span style="color:#8d9cb0;padding:0 0.6px 0 0.4px">:</span>45</div>
<div class="t" style="left:852px;top:762px;font-size:16.2px;color:#111;font-weight:bold">AM</div>
<div class="a" style="left:897px;top:754px;width:25px;height:29px;background:#fff"></div><svg class="a" style="left:897px;top:754.7px" width="22" height="27" viewBox="0 0 22 27"><defs><linearGradient id="sg7" x1="0" y1="0" x2="1" y2="1"><stop offset="0" stop-color="#d9e5fb"/><stop offset="1" stop-color="#a6bff0"/></linearGradient></defs><rect x="0" y="0" width="22" height="26.7" rx="3" fill="url(#sg7)"/><path d="M5.2 10.9 L10.9 3.4 L16.6 10.9 L13.2 10.9 L10.9 8.0 L8.6 10.9 Z" fill="#34476a"/><path d="M5.2 16.7 L8.6 16.7 L10.9 19.6 L13.2 16.7 L16.6 16.7 L10.9 24.2 Z" fill="#34476a"/></svg>
<div class="a" style="left:947px;top:754px;width:96px;height:32px;border:1px solid #8598ad;background:#fff"></div>
<div class="t" style="left:957px;top:762px;font-size:16.3px;color:#222">11<span style="color:#8d9cb0;padding:0 0.6px 0 0.4px">:</span>29</div>
<div class="t" style="left:1005px;top:762px;font-size:16.2px;color:#111;font-weight:bold">AM</div>
<div class="a" style="left:1050px;top:754px;width:25px;height:29px;background:#fff"></div><svg class="a" style="left:1050px;top:754.7px" width="22" height="27" viewBox="0 0 22 27"><defs><linearGradient id="sg8" x1="0" y1="0" x2="1" y2="1"><stop offset="0" stop-color="#d9e5fb"/><stop offset="1" stop-color="#a6bff0"/></linearGradient></defs><rect x="0" y="0" width="22" height="26.7" rx="3" fill="url(#sg8)"/><path d="M5.2 10.9 L10.9 3.4 L16.6 10.9 L13.2 10.9 L10.9 8.0 L8.6 10.9 Z" fill="#34476a"/><path d="M5.2 16.7 L8.6 16.7 L10.9 19.6 L13.2 16.7 L16.6 16.7 L10.9 24.2 Z" fill="#34476a"/></svg>
<div class="a" style="left:1104px;top:754px;width:71px;height:32px;border:1px solid #8598ad;background:#fff"></div>
<div class="t" style="left:1109px;top:762px;font-size:16.2px;color:#222">1.00</div>
<div class="a" style="left:1209px;top:754px;width:56px;height:32px;border:1px solid #8598ad;background:#fff"></div>
<div class="t" style="left:1215px;top:762px;font-size:16.2px;color:#666">Yes</div>
<svg class="a" style="left:1246.6px;top:766.2px" width="12" height="8" viewBox="0 0 12 8"><path d="M1.5 1.5 L6 6 L10.5 1.5" fill="none" stroke="#111" stroke-width="2.7"/></svg>
<div class="a" style="left:519px;top:791.12px;width:63px;height:37.6px;background:#f1f0ec"></div>
<div class="a" style="left:584px;top:791.12px;width:199px;height:37.6px;background:#f1f0ec"></div>
<div class="a" style="left:785px;top:791.12px;width:151px;height:37.6px;background:#f1f0ec"></div>
<div class="a" style="left:938px;top:791.12px;width:151px;height:37.6px;background:#f1f0ec"></div>
<div class="a" style="left:1091px;top:791.12px;width:95px;height:37.6px;background:#f1f0ec"></div>
<div class="a" style="left:1188px;top:791.12px;width:95px;height:37.6px;background:#f1f0ec"></div>
<div class="a" style="left:1285px;top:791.12px;width:40px;height:37.6px;background:#f1f0ec"></div>
<div class="t" style="left:523px;top:802px;font-size:16.2px;color:#222;width:63px;text-align:center">5</div>
<div class="a" style="left:599px;top:794px;width:172px;height:32px;border:1px solid #8598ad;background:#fff"></div>
<div class="t" style="left:603px;top:802px;font-size:16.2px;color:#222">Lesson 4</div>
<div class="a" style="left:794px;top:794px;width:96px;height:32px;border:1px solid #8598ad;background:#fff"></div>
<div class="t" style="left:804px;top:802px;font-size:16.3px;color:#222">11<span style="color:#8d9cb0;padding:0 0.6px 0 0.4px">:</span>30</div>
<div class="t" style="left:852px;top:802px;font-size:16.2px;color:#111;font-weight:bold">AM</div>
<div class="a" style="left:897px;top:794px;width:25px;height:29px;background:#fff"></div><svg class="a" style="left:897px;top:794.7px" width="22" height="27" viewBox="0 0 22 27"><defs><linearGradient id="sg9" x1="0" y1="0" x2="1" y2="1"><stop offset="0" stop-color="#d9e5fb"/><stop offset="1" stop-color="#a6bff0"/></linearGradient></defs><rect x="0" y="0" width="22" height="26.7" rx="3" fill="url(#sg9)"/><path d="M5.2 10.9 L10.9 3.4 L16.6 10.9 L13.2 10.9 L10.9 8.0 L8.6 10.9 Z" fill="#34476a"/><path d="M5.2 16.7 L8.6 16.7 L10.9 19.6 L13.2 16.7 L16.6 16.7 L10.9 24.2 Z" fill="#34476a"/></svg>
<div class="a" style="left:947px;top:794px;width:96px;height:32px;border:1px solid #8598ad;background:#fff"></div>
<div class="t" style="left:957px;top:802px;font-size:16.3px;color:#222">12<span style="color:#8d9cb0;padding:0 0.6px 0 0.4px">:</span>14</div>
<div class="t" style="left:1005px;top:802px;font-size:16.2px;color:#111;font-weight:bold">PM</div>
<div class="a" style="left:1050px;top:794px;width:25px;height:29px;background:#fff"></div><svg class="a" style="left:1050px;top:794.7px" width="22" height="27" viewBox="0 0 22 27"><defs><linearGradient id="sg10" x1="0" y1="0" x2="1" y2="1"><stop offset="0" stop-color="#d9e5fb"/><stop offset="1" stop-color="#a6bff0"/></linearGradient></defs><rect x="0" y="0" width="22" height="26.7" rx="3" fill="url(#sg10)"/><path d="M5.2 10.9 L10.9 3.4 L16.6 10.9 L13.2 10.9 L10.9 8.0 L8.6 10.9 Z" fill="#34476a"/><path d="M5.2 16.7 L8.6 16.7 L10.9 19.6 L13.2 16.7 L16.6 16.7 L10.9 24.2 Z" fill="#34476a"/></svg>
<div class="a" style="left:1104px;top:794px;width:71px;height:32px;border:1px solid #8598ad;background:#fff"></div>
<div class="t" style="left:1109px;top:802px;font-size:16.2px;color:#222">1.00</div>
<div class="a" style="left:1209px;top:794px;width:56px;height:32px;border:1px solid #8598ad;background:#fff"></div>
<div class="t" style="left:1215px;top:802px;font-size:16.2px;color:#666">Yes</div>
<svg class="a" style="left:1246.6px;top:806.2px" width="12" height="8" viewBox="0 0 12 8"><path d="M1.5 1.5 L6 6 L10.5 1.5" fill="none" stroke="#111" stroke-width="2.7"/></svg>
<div class="a" style="left:519px;top:830.9px;width:63px;height:37.6px;background:#f1f0ec"></div>
<div class="a" style="left:584px;top:830.9px;width:199px;height:37.6px;background:#f1f0ec"></div>
<div class="a" style="left:785px;top:830.9px;width:151px;height:37.6px;background:#f1f0ec"></div>
<div class="a" style="left:938px;top:830.9px;width:151px;height:37.6px;background:#f1f0ec"></div>
<div class="a" style="left:1091px;top:830.9px;width:95px;height:37.6px;background:#f1f0ec"></div>
<div class="a" style="left:1188px;top:830.9px;width:95px;height:37.6px;background:#f1f0ec"></div>
<div class="a" style="left:1285px;top:830.9px;width:40px;height:37.6px;background:#f1f0ec"></div>
<div class="t" style="left:523px;top:841px;font-size:16.2px;color:#222;width:63px;text-align:center">6</div>
<div class="a" style="left:599px;top:834px;width:172px;height:32px;border:1px solid #8598ad;background:#fff"></div>
<div class="t" style="left:603px;top:841px;font-size:16.2px;color:#222">Lunch 1</div>
<div class="a" style="left:794px;top:834px;width:96px;height:32px;border:1px solid #8598ad;background:#fff"></div>
<div class="t" style="left:804px;top:841px;font-size:16.3px;color:#222">12<span style="color:#8d9cb0;padding:0 0.6px 0 0.4px">:</span>15</div>
<div class="t" style="left:852px;top:841px;font-size:16.2px;color:#111;font-weight:bold">PM</div>
<div class="a" style="left:897px;top:834px;width:25px;height:29px;background:#fff"></div><svg class="a" style="left:897px;top:834.7px" width="22" height="27" viewBox="0 0 22 27"><defs><linearGradient id="sg11" x1="0" y1="0" x2="1" y2="1"><stop offset="0" stop-color="#d9e5fb"/><stop offset="1" stop-color="#a6bff0"/></linearGradient></defs><rect x="0" y="0" width="22" height="26.7" rx="3" fill="url(#sg11)"/><path d="M5.2 10.9 L10.9 3.4 L16.6 10.9 L13.2 10.9 L10.9 8.0 L8.6 10.9 Z" fill="#34476a"/><path d="M5.2 16.7 L8.6 16.7 L10.9 19.6 L13.2 16.7 L16.6 16.7 L10.9 24.2 Z" fill="#34476a"/></svg>
<div class="a" style="left:947px;top:834px;width:96px;height:32px;border:1px solid #8598ad;background:#fff"></div>
<div class="t" style="left:957px;top:841px;font-size:16.3px;color:#222">12<span style="color:#8d9cb0;padding:0 0.6px 0 0.4px">:</span>34</div>
<div class="t" style="left:1005px;top:841px;font-size:16.2px;color:#111;font-weight:bold">PM</div>
<div class="a" style="left:1050px;top:834px;width:25px;height:29px;background:#fff"></div><svg class="a" style="left:1050px;top:834.7px" width="22" height="27" viewBox="0 0 22 27"><defs><linearGradient id="sg12" x1="0" y1="0" x2="1" y2="1"><stop offset="0" stop-color="#d9e5fb"/><stop offset="1" stop-color="#a6bff0"/></linearGradient></defs><rect x="0" y="0" width="22" height="26.7" rx="3" fill="url(#sg12)"/><path d="M5.2 10.9 L10.9 3.4 L16.6 10.9 L13.2 10.9 L10.9 8.0 L8.6 10.9 Z" fill="#34476a"/><path d="M5.2 16.7 L8.6 16.7 L10.9 19.6 L13.2 16.7 L16.6 16.7 L10.9 24.2 Z" fill="#34476a"/></svg>
<div class="a" style="left:1104px;top:834px;width:71px;height:32px;border:1px solid #8598ad;background:#fff"></div>
<div class="a" style="left:1209px;top:834px;width:56px;height:32px;border:1px solid #8598ad;background:#fff"></div>
<svg class="a" style="left:1246.6px;top:846.2px" width="12" height="8" viewBox="0 0 12 8"><path d="M1.5 1.5 L6 6 L10.5 1.5" fill="none" stroke="#111" stroke-width="2.7"/></svg>
<div class="a" style="left:519px;top:870.68px;width:63px;height:37.6px;background:#f1f0ec"></div>
<div class="a" style="left:584px;top:870.68px;width:199px;height:37.6px;background:#f1f0ec"></div>
<div class="a" style="left:785px;top:870.68px;width:151px;height:37.6px;background:#f1f0ec"></div>
<div class="a" style="left:938px;top:870.68px;width:151px;height:37.6px;background:#f1f0ec"></div>
<div class="a" style="left:1091px;top:870.68px;width:95px;height:37.6px;background:#f1f0ec"></div>
<div class="a" style="left:1188px;top:870.68px;width:95px;height:37.6px;background:#f1f0ec"></div>
<div class="a" style="left:1285px;top:870.68px;width:40px;height:37.6px;background:#f1f0ec"></div>
<div class="t" style="left:523px;top:881px;font-size:16.2px;color:#222;width:63px;text-align:center">7</div>
<div class="a" style="left:599px;top:873px;width:172px;height:32px;border:1px solid #8598ad;background:#fff"></div>
<div class="t" style="left:603px;top:881px;font-size:16.2px;color:#222">Lunch 2</div>
<div class="a" style="left:794px;top:873px;width:96px;height:32px;border:1px solid #8598ad;background:#fff"></div>
<div class="t" style="left:804px;top:881px;font-size:16.3px;color:#222">12<span style="color:#8d9cb0;padding:0 0.6px 0 0.4px">:</span>35</div>
<div class="t" style="left:852px;top:881px;font-size:16.2px;color:#111;font-weight:bold">PM</div>
<div class="a" style="left:897px;top:873px;width:25px;height:29px;background:#fff"></div><svg class="a" style="left:897px;top:873.7px" width="22" height="27" viewBox="0 0 22 27"><defs><linearGradient id="sg13" x1="0" y1="0" x2="1" y2="1"><stop offset="0" stop-color="#d9e5fb"/><stop offset="1" stop-color="#a6bff0"/></linearGradient></defs><rect x="0" y="0" width="22" height="26.7" rx="3" fill="url(#sg13)"/><path d="M5.2 10.9 L10.9 3.4 L16.6 10.9 L13.2 10.9 L10.9 8.0 L8.6 10.9 Z" fill="#34476a"/><path d="M5.2 16.7 L8.6 16.7 L10.9 19.6 L13.2 16.7 L16.6 16.7 L10.9 24.2 Z" fill="#34476a"/></svg>
<div class="a" style="left:947px;top:873px;width:96px;height:32px;border:1px solid #8598ad;background:#fff"></div>
<div class="t" style="left:957px;top:881px;font-size:16.3px;color:#222">12<span style="color:#8d9cb0;padding:0 0.6px 0 0.4px">:</span>54</div>
<div class="t" style="left:1005px;top:881px;font-size:16.2px;color:#111;font-weight:bold">PM</div>
<div class="a" style="left:1050px;top:873px;width:25px;height:29px;background:#fff"></div><svg class="a" style="left:1050px;top:873.7px" width="22" height="27" viewBox="0 0 22 27"><defs><linearGradient id="sg14" x1="0" y1="0" x2="1" y2="1"><stop offset="0" stop-color="#d9e5fb"/><stop offset="1" stop-color="#a6bff0"/></linearGradient></defs><rect x="0" y="0" width="22" height="26.7" rx="3" fill="url(#sg14)"/><path d="M5.2 10.9 L10.9 3.4 L16.6 10.9 L13.2 10.9 L10.9 8.0 L8.6 10.9 Z" fill="#34476a"/><path d="M5.2 16.7 L8.6 16.7 L10.9 19.6 L13.2 16.7 L16.6 16.7 L10.9 24.2 Z" fill="#34476a"/></svg>
<div class="a" style="left:1104px;top:873px;width:71px;height:32px;border:1px solid #8598ad;background:#fff"></div>
<div class="a" style="left:1209px;top:873px;width:56px;height:32px;border:1px solid #8598ad;background:#fff"></div>
<svg class="a" style="left:1246.6px;top:885.2px" width="12" height="8" viewBox="0 0 12 8"><path d="M1.5 1.5 L6 6 L10.5 1.5" fill="none" stroke="#111" stroke-width="2.7"/></svg>
<div class="a" style="left:519px;top:910.46px;width:63px;height:37.6px;background:#f1f0ec"></div>
<div class="a" style="left:584px;top:910.46px;width:199px;height:37.6px;background:#f1f0ec"></div>
<div class="a" style="left:785px;top:910.46px;width:151px;height:37.6px;background:#f1f0ec"></div>
<div class="a" style="left:938px;top:910.46px;width:151px;height:37.6px;background:#f1f0ec"></div>
<div class="a" style="left:1091px;top:910.46px;width:95px;height:37.6px;background:#f1f0ec"></div>
<div class="a" style="left:1188px;top:910.46px;width:95px;height:37.6px;background:#f1f0ec"></div>
<div class="a" style="left:1285px;top:910.46px;width:40px;height:37.6px;background:#f1f0ec"></div>
<div class="t" style="left:523px;top:921px;font-size:16.2px;color:#222;width:63px;text-align:center">8</div>
<div class="a" style="left:599px;top:913px;width:172px;height:32px;border:1px solid #8598ad;background:#fff"></div>
<div class="t" style="left:603px;top:921px;font-size:16.2px;color:#222">Lesson 5</div>
<div class="a" style="left:794px;top:913px;width:96px;height:32px;border:1px solid #8598ad;background:#fff"></div>
<div class="t" style="left:804px;top:921px;font-size:16.3px;color:#222">12<span style="color:#8d9cb0;padding:0 0.6px 0 0.4px">:</span>55</div>
<div class="t" style="left:852px;top:921px;font-size:16.2px;color:#111;font-weight:bold">PM</div>
<div class="a" style="left:897px;top:913px;width:25px;height:29px;background:#fff"></div><svg class="a" style="left:897px;top:913.7px" width="22" height="27" viewBox="0 0 22 27"><defs><linearGradient id="sg15" x1="0" y1="0" x2="1" y2="1"><stop offset="0" stop-color="#d9e5fb"/><stop offset="1" stop-color="#a6bff0"/></linearGradient></defs><rect x="0" y="0" width="22" height="26.7" rx="3" fill="url(#sg15)"/><path d="M5.2 10.9 L10.9 3.4 L16.6 10.9 L13.2 10.9 L10.9 8.0 L8.6 10.9 Z" fill="#34476a"/><path d="M5.2 16.7 L8.6 16.7 L10.9 19.6 L13.2 16.7 L16.6 16.7 L10.9 24.2 Z" fill="#34476a"/></svg>
<div class="a" style="left:947px;top:913px;width:96px;height:32px;border:1px solid #8598ad;background:#fff"></div>
<div class="t" style="left:957px;top:921px;font-size:16.3px;color:#222">01<span style="color:#8d9cb0;padding:0 0.6px 0 0.4px">:</span>39</div>
<div class="t" style="left:1005px;top:921px;font-size:16.2px;color:#111;font-weight:bold">PM</div>
<div class="a" style="left:1050px;top:913px;width:25px;height:29px;background:#fff"></div><svg class="a" style="left:1050px;top:913.7px" width="22" height="27" viewBox="0 0 22 27"><defs><linearGradient id="sg16" x1="0" y1="0" x2="1" y2="1"><stop offset="0" stop-color="#d9e5fb"/><stop offset="1" stop-color="#a6bff0"/></linearGradient></defs><rect x="0" y="0" width="22" height="26.7" rx="3" fill="url(#sg16)"/><path d="M5.2 10.9 L10.9 3.4 L16.6 10.9 L13.2 10.9 L10.9 8.0 L8.6 10.9 Z" fill="#34476a"/><path d="M5.2 16.7 L8.6 16.7 L10.9 19.6 L13.2 16.7 L16.6 16.7 L10.9 24.2 Z" fill="#34476a"/></svg>
<div class="a" style="left:1104px;top:913px;width:71px;height:32px;border:1px solid #8598ad;background:#fff"></div>
<div class="t" style="left:1109px;top:921px;font-size:16.2px;color:#222">1.00</div>
<div class="a" style="left:1209px;top:913px;width:56px;height:32px;border:1px solid #8598ad;background:#fff"></div>
<div class="t" style="left:1215px;top:921px;font-size:16.2px;color:#666">Yes</div>
<svg class="a" style="left:1246.6px;top:925.2px" width="12" height="8" viewBox="0 0 12 8"><path d="M1.5 1.5 L6 6 L10.5 1.5" fill="none" stroke="#111" stroke-width="2.7"/></svg>
<div class="a" style="left:519px;top:950.24px;width:63px;height:37.6px;background:#f1f0ec"></div>
<div class="a" style="left:584px;top:950.24px;width:199px;height:37.6px;background:#f1f0ec"></div>
<div class="a" style="left:785px;top:950.24px;width:151px;height:37.6px;background:#f1f0ec"></div>
<div class="a" style="left:938px;top:950.24px;width:151px;height:37.6px;background:#f1f0ec"></div>
<div class="a" style="left:1091px;top:950.24px;width:95px;height:37.6px;background:#f1f0ec"></div>
<div class="a" style="left:1188px;top:950.24px;width:95px;height:37.6px;background:#f1f0ec"></div>
<div class="a" style="left:1285px;top:950.24px;width:40px;height:37.6px;background:#f1f0ec"></div>
<div class="t" style="left:523px;top:961px;font-size:16.2px;color:#222;width:63px;text-align:center">9</div>
<div class="a" style="left:599px;top:953px;width:172px;height:32px;border:1px solid #8598ad;background:#fff"></div>
<div class="t" style="left:603px;top:961px;font-size:16.2px;color:#222">Lesson 6</div>
<div class="a" style="left:794px;top:953px;width:96px;height:32px;border:1px solid #8598ad;background:#fff"></div>
<div class="t" style="left:804px;top:961px;font-size:16.3px;color:#222">01<span style="color:#8d9cb0;padding:0 0.6px 0 0.4px">:</span>40</div>
<div class="t" style="left:852px;top:961px;font-size:16.2px;color:#111;font-weight:bold">PM</div>
<div class="a" style="left:897px;top:953px;width:25px;height:29px;background:#fff"></div><svg class="a" style="left:897px;top:953.7px" width="22" height="27" viewBox="0 0 22 27"><defs><linearGradient id="sg17" x1="0" y1="0" x2="1" y2="1"><stop offset="0" stop-color="#d9e5fb"/><stop offset="1" stop-color="#a6bff0"/></linearGradient></defs><rect x="0" y="0" width="22" height="26.7" rx="3" fill="url(#sg17)"/><path d="M5.2 10.9 L10.9 3.4 L16.6 10.9 L13.2 10.9 L10.9 8.0 L8.6 10.9 Z" fill="#34476a"/><path d="M5.2 16.7 L8.6 16.7 L10.9 19.6 L13.2 16.7 L16.6 16.7 L10.9 24.2 Z" fill="#34476a"/></svg>
<div class="a" style="left:947px;top:953px;width:96px;height:32px;border:1px solid #8598ad;background:#fff"></div>
<div class="t" style="left:957px;top:961px;font-size:16.3px;color:#222">02<span style="color:#8d9cb0;padding:0 0.6px 0 0.4px">:</span>25</div>
<div class="t" style="left:1005px;top:961px;font-size:16.2px;color:#111;font-weight:bold">PM</div>
<div class="a" style="left:1050px;top:953px;width:25px;height:29px;background:#fff"></div><svg class="a" style="left:1050px;top:953.7px" width="22" height="27" viewBox="0 0 22 27"><defs><linearGradient id="sg18" x1="0" y1="0" x2="1" y2="1"><stop offset="0" stop-color="#d9e5fb"/><stop offset="1" stop-color="#a6bff0"/></linearGradient></defs><rect x="0" y="0" width="22" height="26.7" rx="3" fill="url(#sg18)"/><path d="M5.2 10.9 L10.9 3.4 L16.6 10.9 L13.2 10.9 L10.9 8.0 L8.6 10.9 Z" fill="#34476a"/><path d="M5.2 16.7 L8.6 16.7 L10.9 19.6 L13.2 16.7 L16.6 16.7 L10.9 24.2 Z" fill="#34476a"/></svg>
<div class="a" style="left:1104px;top:953px;width:71px;height:32px;border:1px solid #8598ad;background:#fff"></div>
<div class="t" style="left:1109px;top:961px;font-size:16.2px;color:#222">1.00</div>
<div class="a" style="left:1209px;top:953px;width:56px;height:32px;border:1px solid #8598ad;background:#fff"></div>
<div class="t" style="left:1215px;top:961px;font-size:16.2px;color:#666">Yes</div>
<svg class="a" style="left:1246.6px;top:965.2px" width="12" height="8" viewBox="0 0 12 8"><path d="M1.5 1.5 L6 6 L10.5 1.5" fill="none" stroke="#111" stroke-width="2.7"/></svg>
<div class="a" style="left:517px;top:990px;width:810px;height:37px;background:#b5c3cf;border-radius:0 0 6px 6px"></div>
<div class="a" style="left:524px;top:994px;width:81px;height:31px;border:1px solid #aeb0b3;border-radius:4px;background:linear-gradient(#ffffff,#e7e7e7)"></div>
<div class="t" style="left:524px;top:1000px;font-size:16.2px;color:#333;width:81px;text-align:center">Cancel</div>
<div class="a" style="left:1227px;top:994px;width:97px;height:31px;border:1px solid #eab36a;border-radius:4px;background:linear-gradient(#fde6c0,#f7a737)"></div>
<div class="t" style="left:1227px;top:1001px;font-size:15.5px;color:#111;font-weight:bold;width:97px;text-align:center">Save</div>
</body></html>
